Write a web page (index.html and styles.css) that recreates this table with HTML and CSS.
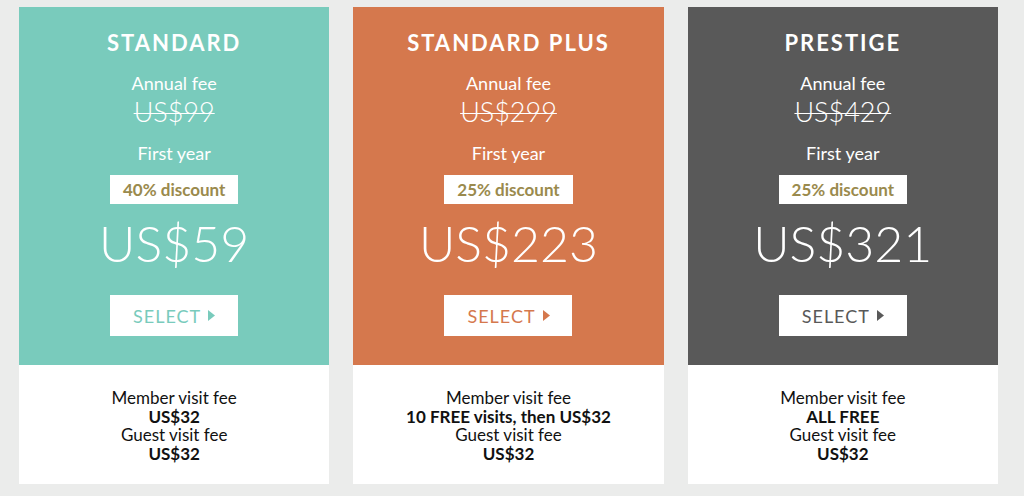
FILE: index.html
```html
<!DOCTYPE html>
<html lang="en">
<head>
    <meta charset="UTF-8">
    <meta name="viewport" content="width=device-width, initial-scale=1.0">
    <title>Membership Plans</title>
    <link rel="stylesheet" href="styles.css">
</head>
<body>
    <main class="plans">
        <div class="plan plan-standard">
            <div class="plan-top">
                <h2 class="plan-name">STANDARD</h2>
                <p class="label">Annual fee</p>
                <p class="old-price">US$99</p>
                <p class="label first-year">First year</p>
                <span class="discount">40% discount</span>
                <p class="price">US$59</p>
                <a href="#" class="select">SELECT <svg width="7" height="11" viewBox="0 0 7 11"><path d="M0 0 L7 5.5 L0 11 Z" fill="currentColor"/></svg></a>
            </div>
            <div class="plan-bottom">
                <p>Member visit fee</p>
                <p class="strong">US$32</p>
                <p>Guest visit fee</p>
                <p class="strong">US$32</p>
            </div>
        </div>

        <div class="plan plan-plus">
            <div class="plan-top">
                <h2 class="plan-name">STANDARD PLUS</h2>
                <p class="label">Annual fee</p>
                <p class="old-price">US$299</p>
                <p class="label first-year">First year</p>
                <span class="discount">25% discount</span>
                <p class="price">US$223</p>
                <a href="#" class="select">SELECT <svg width="7" height="11" viewBox="0 0 7 11"><path d="M0 0 L7 5.5 L0 11 Z" fill="currentColor"/></svg></a>
            </div>
            <div class="plan-bottom">
                <p>Member visit fee</p>
                <p class="strong">10 FREE visits, then US$32</p>
                <p>Guest visit fee</p>
                <p class="strong">US$32</p>
            </div>
        </div>

        <div class="plan plan-prestige">
            <div class="plan-top">
                <h2 class="plan-name">PRESTIGE</h2>
                <p class="label">Annual fee</p>
                <p class="old-price">US$429</p>
                <p class="label first-year">First year</p>
                <span class="discount">25% discount</span>
                <p class="price">US$321</p>
                <a href="#" class="select">SELECT <svg width="7" height="11" viewBox="0 0 7 11"><path d="M0 0 L7 5.5 L0 11 Z" fill="currentColor"/></svg></a>
            </div>
            <div class="plan-bottom">
                <p>Member visit fee</p>
                <p class="strong">ALL FREE</p>
                <p>Guest visit fee</p>
                <p class="strong">US$32</p>
            </div>
        </div>
    </main>
</body>
</html>
```

FILE: styles.css
```css
body {
    font-family: Lato, "Open Sans", sans-serif;
    background-color: #ebeceb;
    margin: 0;
    padding: 0;
}
p, h2 {
    margin: 0;
}
.plans {
    display: flex;
    gap: 24px;
    padding: 7px 26px 0 19px;
}
.plan {
    flex: 1;
    display: flex;
    flex-direction: column;
}
.plan-top {
    height: 358px;
    box-sizing: border-box;
    padding-top: 22px;
    display: flex;
    flex-direction: column;
    align-items: center;
    color: white;
}
.plan-standard .plan-top { background-color: #79cbbc; }
.plan-plus .plan-top { background-color: #d5784d; }
.plan-prestige .plan-top { background-color: #595959; }
.plan-standard .select { color: #79cbbc; }
.plan-plus .select { color: #d5784d; }
.plan-prestige .select { color: #595959; }

.plan-name {
    font-size: 22px;
    line-height: 28px;
    font-weight: 700;
    letter-spacing: 2px;
}
.label {
    font-size: 18px;
    line-height: 22px;
    margin-top: 15px;
}
.old-price {
    font-size: 27px;
    line-height: 30px;
    font-weight: 300;
    margin-top: 3px;
    text-decoration: line-through;
    text-decoration-thickness: 1px;
}
.first-year {
    margin-top: 15px;
}
.discount {
    display: inline-block;
    margin-top: 11px;
    height: 29px;
    line-height: 29px;
    padding: 0 13px;
    background-color: white;
    color: #9a8a4d;
    font-size: 17px;
    font-weight: 700;
}
.price {
    font-size: 50px;
    line-height: 60px;
    font-weight: 300;
    margin-top: 9px;
}
.select {
    display: flex;
    align-items: center;
    justify-content: center;
    gap: 7px;
    margin-top: 22px;
    width: 128px;
    height: 41px;
    background-color: white;
    font-size: 18px;
    letter-spacing: 1px;
    text-decoration: none;
}
.plan-bottom {
    height: 119px;
    box-sizing: border-box;
    padding-top: 24px;
    background-color: white;
    text-align: center;
    color: #111;
    font-size: 17px;
    line-height: 18.5px;
}
.strong {
    font-weight: 700;
}
```
